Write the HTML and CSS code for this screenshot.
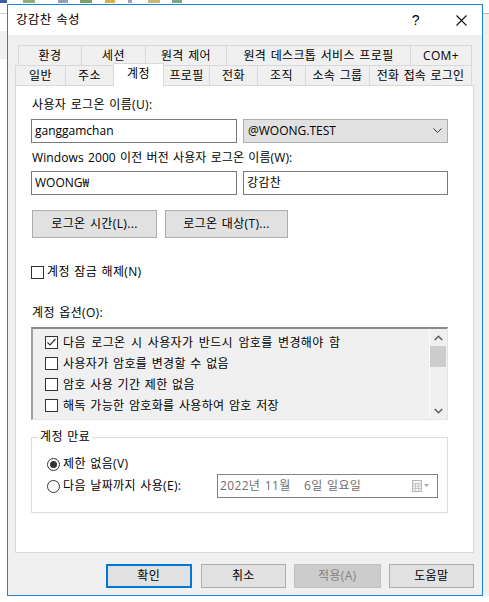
FILE: index.html
```html
<!DOCTYPE html>
<html lang="ko">
<head>
<meta charset="utf-8">
<title>강감찬 속성</title>
<link rel="stylesheet" href="styles.css">
</head>
<body>
<div class="topstrip">
  <span class="ic ic-start"></span>
  <span class="ic ic-a"></span>
  <span class="ic ic-b"></span>
  <span class="ic ic-c"></span>
  <span class="ic ic-d"></span>
  <span class="ic ic-e"></span>
  <span class="ic ic-f"></span>
  <span class="ic ic-g"></span>
</div>
<div class="desk">
  <div class="gutter-left">
    <div class="gl-white1"></div>
    <div class="gl-line"></div>
    <div class="gl-white2"></div>
    <div class="gl-gray"></div>
    <div class="gl-rest"></div>
  </div>
  <div class="window">
    <div class="titlebar">
      <span class="title">강감찬 속성</span>
      <span class="help">?</span>
      <svg class="close" width="11" height="11" viewBox="0 0 11 11"><path d="M0.5 0.5 L10.5 10.5 M10.5 0.5 L0.5 10.5" stroke="#111" stroke-width="1.1" fill="none"/></svg>
    </div>
    <div class="body">
      <div class="tabs tabs1">
        <div class="tab">환경</div>
        <div class="tab">세션</div>
        <div class="tab">원격 제어</div>
        <div class="tab">원격 데스크톱 서비스 프로필</div>
        <div class="tab">COM+</div>
      </div>
      <div class="tabs tabs2">
        <div class="tab">일반</div>
        <div class="tab">주소</div>
        <div class="tab selected">계정</div>
        <div class="tab">프로필</div>
        <div class="tab">전화</div>
        <div class="tab">조직</div>
        <div class="tab">소속 그룹</div>
        <div class="tab">전화 접속 로그인</div>
      </div>
      <div class="panel">
        <div class="lbl lbl-user">사용자 로그온 이름(U):</div>
        <div class="fieldrow fieldrow-1">
          <div class="input">ganggamchan</div>
          <div class="combo"><span>@WOONG.TEST</span>
            <svg width="9" height="6" viewBox="0 0 9 6"><path d="M0.5 0.5 L4.5 4.5 L8.5 0.5" stroke="#333" fill="none"/></svg>
          </div>
        </div>
        <div class="lbl lbl-pre">Windows 2000 이전 버전 사용자 로그온 이름(W):</div>
        <div class="fieldrow fieldrow-2">
          <div class="input">WOONG₩</div>
          <div class="input input-r">강감찬</div>
        </div>
        <div class="btnrow">
          <div class="btn btn-hours">로그온 시간(L)...</div>
          <div class="btn btn-to">로그온 대상(T)...</div>
        </div>
        <div class="chkrow">
          <span class="cb"></span><span>계정 잠금 해제(N)</span>
        </div>
        <div class="lbl lbl-opt">계정 옵션(O):</div>
        <div class="list">
          <div class="items">
            <div class="item"><span class="cb"><svg width="11" height="11" viewBox="0 0 11 11"><path d="M1.5 5.5 L4 8 L9.5 2" stroke="#333" stroke-width="1.2" fill="none"/></svg></span><span>다음 로그온 시 사용자가 반드시 암호를 변경해야 함</span></div>
            <div class="item"><span class="cb"></span><span>사용자가 암호를 변경할 수 없음</span></div>
            <div class="item"><span class="cb"></span><span>암호 사용 기간 제한 없음</span></div>
            <div class="item"><span class="cb"></span><span>해독 가능한 암호화를 사용하여 암호 저장</span></div>
          </div>
          <div class="sb">
            <div class="sb-arrow"><svg width="9" height="6" viewBox="0 0 9 6"><path d="M0.8 5 L4.5 1.3 L8.2 5" stroke="#606060" stroke-width="1.6" fill="none"/></svg></div>
            <div class="sb-thumb"></div>
            <div class="sb-track"></div>
            <div class="sb-arrow"><svg width="9" height="6" viewBox="0 0 9 6"><path d="M0.8 1 L4.5 4.7 L8.2 1" stroke="#606060" stroke-width="1.6" fill="none"/></svg></div>
          </div>
        </div>
        <div class="group">
          <div class="legend">계정 만료</div>
          <div class="radiorow radiorow-1">
            <svg class="radio" width="13" height="13" viewBox="0 0 13 13"><circle cx="6.5" cy="6.5" r="6" fill="#fff" stroke="#333"/><circle cx="6.5" cy="6.5" r="3.5" fill="#333"/></svg>
            <span>제한 없음(V)</span>
          </div>
          <div class="radiorow radiorow-2">
            <svg class="radio" width="13" height="13" viewBox="0 0 13 13"><circle cx="6.5" cy="6.5" r="6" fill="#fff" stroke="#333"/></svg>
            <span>다음 날짜까지 사용(E):</span>
            <div class="date">
              <span>2022년 11월 &nbsp; 6일 일요일</span>
              <svg class="cal" width="18" height="12" viewBox="0 0 18 12"><rect x="0.5" y="0.5" width="9" height="11" fill="#f4f4f4" stroke="#b5b5b5"/><path d="M0.5 3.5 H9.5 M0.5 6 H9.5 M0.5 8.5 H9.5 M3.5 3.5 V11.5 M6.5 3.5 V11.5" stroke="#c8c8c8"/><path d="M12 4 L17 4 L14.5 7 Z" fill="#a8a8a8"/></svg>
            </div>
          </div>
        </div>
      </div>
      <div class="actions">
        <div class="abtn abtn-ok">확인</div>
        <div class="abtn abtn-cancel">취소</div>
        <div class="abtn abtn-apply">적용(A)</div>
        <div class="abtn abtn-help">도움말</div>
      </div>
    </div>
  </div>
  <div class="gutter-right">
    <div class="gr-white"></div>
    <div class="gr-line"></div>
    <div class="gr-gray"></div>
  </div>
</div>
</body>
</html>
```
FILE: styles.css
```css
html, body {
  margin: 0;
  padding: 0;
}
body {
  width: 489px;
  height: 602px;
  overflow: hidden;
  background: #fff;
  color: #000;
  font-family: "Open Sans", "Noto Sans CJK KR", sans-serif;
  font-size: 12px;
  line-height: 16px;
  letter-spacing: 0.35px;
  word-spacing: 1px;
}

/* top strip with partial taskbar icons */
.topstrip {
  height: 4px;
  display: flex;
  align-items: flex-start;
  background: #fff;
}
.ic { height: 3px; display: block; }
.ic-start { width: 7px; background: #3a5fa8; }
.ic-a { width: 12px; margin-left: 16px; background: #8cae7a; }
.ic-b { width: 10px; margin-left: 23px; background: #8fa3bf; }
.ic-c { width: 12px; margin-left: 12px; background: #7aa06a; }
.ic-d { width: 10px; margin-left: 13px; background: #d9b24a; }
.ic-e { width: 4px; margin-left: 13px; background: #9aa6b8; }
.ic-f { width: 12px; margin-left: 16px; background: #c9b77a; }
.ic-g { width: 10px; margin-left: 12px; background: #79a88b; }

.desk {
  display: flex;
  height: 592px;
}

.gutter-left {
  width: 7px;
  display: flex;
  flex-direction: column;
}
.gl-white1 { height: 9px; background: #fff; }
.gl-line { height: 1px; background: #cfcfcf; }
.gl-white2 { height: 17px; background: #fff; }
.gl-gray { height: 28px; background: #f0f0f0; }
.gl-rest { flex: 1; background: #fff; }

.gutter-right {
  flex: 1;
  display: flex;
  flex-direction: column;
}
.gr-white { height: 9px; background: #fff; }
.gr-line { height: 1px; background: #b8b8b8; }
.gr-gray { flex: 1; background: #f0f0f0; }

.window {
  width: 476px;
  box-sizing: border-box;
  border: 1px solid #1883d7;
  background: #f0f0f0;
  display: flex;
  flex-direction: column;
}

.titlebar {
  height: 30px;
  background: #fff;
  display: flex;
  align-items: center;
  padding-left: 8px;
  flex-shrink: 0;
}
.title { flex: 1; font-size: 12.5px; }
.help {
  font-size: 14px;
  margin-right: 36px;
  font-family: "Liberation Sans", sans-serif;
}
.close { margin-right: 15px; }

.body {
  flex: 1;
  padding: 10px 8px 0 7px;
}

/* tabs */
.tabs {
  display: flex;
  height: 20px;
}
.tabs1 { margin-left: 3px; }
.tabs2 { align-items: flex-end; }
.tab {
  box-sizing: border-box;
  height: 20px;
  border-top: 1px solid #d9d9d9;
  border-left: 1px solid #d9d9d9;
  background: #f0f0f0;
  text-align: center;
  line-height: 19px;
  white-space: nowrap;
}
.tab:last-child { border-right: 1px solid #d9d9d9; }

.tabs1 .tab:nth-child(1) { width: 63px; }
.tabs1 .tab:nth-child(2) { width: 64px; }
.tabs1 .tab:nth-child(3) { width: 81px; }
.tabs1 .tab:nth-child(4) { width: 184px; }
.tabs1 .tab:nth-child(5) { width: 62px; }

.tabs2 .tab:nth-child(1) { width: 50px; }
.tabs2 .tab:nth-child(2) { width: 48px; }
.tabs2 .tab:nth-child(3) { width: 51px; }
.tabs2 .tab:nth-child(4) { width: 46px; }
.tabs2 .tab:nth-child(5) { width: 48px; }
.tabs2 .tab:nth-child(6) { width: 48px; }
.tabs2 .tab:nth-child(7) { width: 64px; }
.tabs2 .tab:nth-child(8) { width: 103px; letter-spacing: 0.2px; }

.tab.selected {
  height: 23px;
  margin-bottom: -1px;
  margin-right: -1px;
  background: #fff;
  border-right: 1px solid #d9d9d9;
  line-height: 16px;
  padding-top: 2px;
  position: relative;
  z-index: 1;
}

/* panel */
.panel {
  height: 468px;
  box-sizing: border-box;
  border: 1px solid #d9d9d9;
  background: #fff;
  padding: 11px 0 0 15px;
}
.lbl { padding-left: 1px; }
.fieldrow {
  display: flex;
  gap: 6px;
  height: 24px;
}
.fieldrow-1 { margin-top: 6px; }
.lbl-pre { margin-top: 7px; letter-spacing: 0.1px; }
.fieldrow-2 { margin-top: 5px; }
.input {
  box-sizing: border-box;
  width: 206px;
  height: 24px;
  border: 1px solid #7a7a7a;
  background: #fff;
  padding-left: 3px;
  line-height: 22px;
  letter-spacing: 0;
}
.input-r { width: 205px; letter-spacing: 0.35px; }
.combo {
  box-sizing: border-box;
  width: 205px;
  height: 24px;
  border: 1px solid #adadad;
  background: #e1e1e1;
  padding: 0 5px 0 4px;
  line-height: 22px;
  letter-spacing: 0;
  display: flex;
  align-items: center;
  justify-content: space-between;
}

.btnrow {
  display: flex;
  gap: 8px;
  margin-top: 15px;
  margin-left: 1px;
}
.btn {
  box-sizing: border-box;
  height: 28px;
  border: 1px solid #adadad;
  background: #e1e1e1;
  text-align: center;
  line-height: 26px;
}
.btn-hours { width: 125px; }
.btn-to { width: 123px; }

.chkrow {
  margin-top: 26px;
  height: 16px;
  display: flex;
  align-items: center;
  gap: 3px;
}
.cb {
  box-sizing: border-box;
  width: 13px;
  height: 13px;
  border: 1px solid #333;
  background: #fff;
  display: flex;
  align-items: center;
  justify-content: center;
  flex-shrink: 0;
}

.lbl-opt { margin-top: 25px; }

.list {
  margin-top: 6px;
  box-sizing: border-box;
  width: 417px;
  height: 93px;
  background: #f0f0f0;
  border-top: 2px solid #8a8a8a;
  border-left: 2px solid #a0a0a0;
  border-right: 1px solid #e3e3e3;
  border-bottom: 1px solid #e3e3e3;
  display: flex;
}
.items {
  flex: 1;
  padding: 3px 0 0 12px;
}
.item {
  height: 21px;
  display: flex;
  align-items: center;
  gap: 5px;
  white-space: nowrap;
}
.item:first-child { word-spacing: 2px; }
.sb {
  width: 18px;
  box-sizing: border-box;
  border-left: 1px solid #fbfbfb;
  display: flex;
  flex-direction: column;
}
.sb-arrow {
  height: 17px;
  display: flex;
  align-items: center;
  justify-content: center;
}
.sb-thumb {
  height: 21px;
  margin-right: 1px;
  background: #cdcdcd;
}
.sb-track { flex: 1; }

/* group box */
.group {
  margin-top: 17px;
  box-sizing: border-box;
  width: 417px;
  height: 76px;
  border: 1px solid #dcdcdc;
  padding: 0 9px 0 15px;
}
.legend {
  margin-top: -9px;
  margin-left: -9px;
  width: fit-content;
  padding: 0 2px;
  background: #fff;
}
.radiorow {
  display: flex;
  align-items: center;
  gap: 3px;
}
.radiorow-1 { margin-top: 11px; height: 16px; }
.radiorow-2 { margin-top: 2px; height: 24px; }
.radio { flex-shrink: 0; }
.date {
  margin-left: auto;
  box-sizing: border-box;
  width: 221px;
  height: 24px;
  border: 1px solid #828282;
  background: #fff;
  color: #6d6d6d;
  padding: 0 7px 0 2px;
  display: flex;
  align-items: center;
  justify-content: space-between;
  white-space: nowrap;
}

/* bottom buttons */
.actions {
  display: flex;
  margin-top: 11px;
  margin-left: 91px;
  height: 24px;
}
.abtn {
  box-sizing: border-box;
  width: 86px;
  height: 24px;
  border: 1px solid #adadad;
  background: #e1e1e1;
  text-align: center;
  line-height: 22px;
}
.abtn-ok {
  border: 2px solid #0078d7;
  line-height: 20px;
}
.abtn-cancel { margin-left: 9px; }
.abtn-apply {
  margin-left: 8px;
  width: 87px;
  background: #cccccc;
  border-color: #bfbfbf;
  color: #838383;
}
.abtn-help { margin-left: 8px; }
```
